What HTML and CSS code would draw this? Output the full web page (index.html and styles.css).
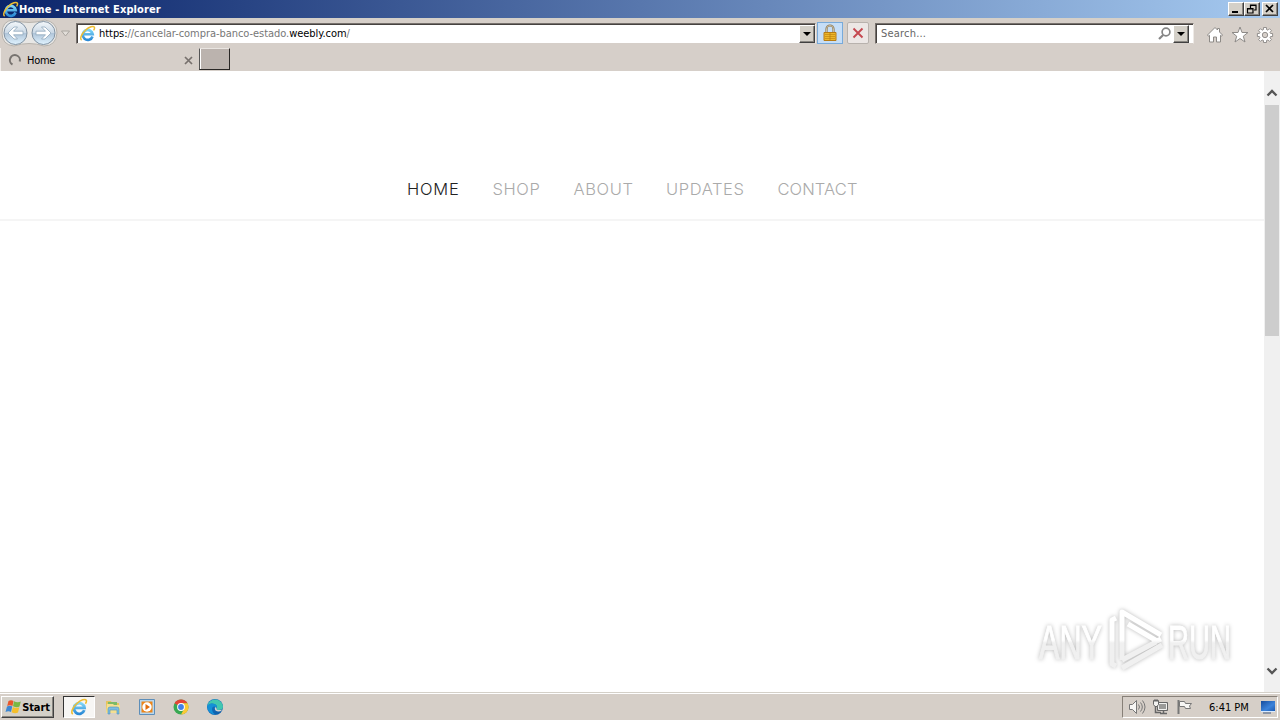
FILE: index.html
```html
<!DOCTYPE html>
<html lang="en">
<head>
    <meta charset="UTF-8">
    <title>Home</title>
    <link rel="stylesheet" href="styles.css">
</head>
<body>
    <!-- shared icons -->
    <svg class="defs" width="0" height="0">
        <defs>
            <linearGradient id="ieBlue" x1="0" y1="0" x2="0" y2="1">
                <stop offset="0" stop-color="#7fd5f7"/>
                <stop offset="1" stop-color="#2b8ad6"/>
            </linearGradient>
            <linearGradient id="orb" x1="0" y1="0" x2="0" y2="1">
                <stop offset="0" stop-color="#f4f8fb"/>
                <stop offset="0.48" stop-color="#cbd9e6"/>
                <stop offset="0.52" stop-color="#b0c5d9"/>
                <stop offset="1" stop-color="#e0f3ff"/>
            </linearGradient>
            <linearGradient id="screen" x1="0" y1="0" x2="1" y2="1">
                <stop offset="0" stop-color="#164c9c"/>
                <stop offset="0.6" stop-color="#3b83db"/>
                <stop offset="1" stop-color="#1d5ab0"/>
            </linearGradient>
            <linearGradient id="edge" x1="0" y1="0" x2="1" y2="1">
                <stop offset="0" stop-color="#1679c9"/>
                <stop offset="1" stop-color="#0c59a4"/>
            </linearGradient>
            <linearGradient id="mark" gradientUnits="userSpaceOnUse" x1="0" y1="0" x2="0" y2="74">
                <stop offset="0.46" stop-color="#fff"/>
                <stop offset="0.5" stop-color="#f0f0f0"/>
                <stop offset="1" stop-color="#f0f0f0"/>
            </linearGradient>
            <symbol id="ie" viewBox="0 0 16 16">
                <path d="M12.700 10.800A4.700 4.700 0 1 1 12.900 8.700H4.500" fill="none" stroke="url(#ieBlue)" stroke-width="2.500"/>
                <path d="M2.500 14.300C.4 13 2.400 8.200 6.100 4.900C9.600 1.700 13.600.4 14.500 2.100C14.900 3 14.300 4.200 13.700 5.100" fill="none" stroke="#eebd32" stroke-width="1.400"/>
            </symbol>
        </defs>
    </svg>

    <header class="titlebar">
        <svg class="title-icon" width="17" height="17"><use href="#ie"/></svg>
        <h1>Home - Internet Explorer</h1>
        <div class="window-buttons">
            <button><svg width="12" height="10"><path d="M2 8h6" stroke="#000" stroke-width="2"/></svg></button>
            <button><svg width="12" height="10"><path d="M4.500 4V1H10v5H8M4 1.500h6M1.500 4.500H7V9H1.500zM1 5h6" fill="none" stroke="#000" stroke-width="1.200"/></svg></button>
            <button class="close"><svg width="12" height="10"><path d="M2 1l7 7M9 1L2 8" stroke="#000" stroke-width="1.700"/></svg></button>
        </div>
    </header>

    <div class="toolbar">
        <svg class="history" width="76" height="30" viewBox="0 0 76 30">
            <path d="M13 2Q29 7 45 2Q57 4 57 15Q56 28 44 28Q29 23 14 28Q2 27 2 15Q2 3 13 2" fill="#e8e7e5" stroke="#b7b3ad"/>
            <circle cx="15.500" cy="15" r="11.500" fill="url(#orb)" stroke="#8293a3"/>
            <circle cx="43.500" cy="15" r="11.500" fill="url(#orb)" stroke="#8293a3"/>
            <path d="M8 15l6-6h3.500l-4 4.200H23v3.600h-9.500l4 4.200H14z" fill="#fff" stroke="#91a8bd" stroke-width=".8"/>
            <path d="M51 15l-6-6h-3.500l4 4.200H36v3.600h9.500l-4 4.200H45z" fill="#fff" stroke="#91a8bd" stroke-width=".8"/>
            <path d="M61.500 13h8L65.500 18z" fill="#e2ded9" stroke="#aaa6a0"/>
        </svg>
        <div class="field address">
            <svg width="17" height="17"><use href="#ie"/></svg>
            <span class="url"><b>https:</b>//cancelar-compra-banco-estado.<b>weebly.com</b>/</span>
            <button class="drop"></button>
        </div>
        <button class="lock">
            <svg width="16" height="18" viewBox="0 0 16 18">
                <path d="M4.500 9V5a3.500 3.500 0 0 1 7 0v4" fill="none" stroke="#8b7958" stroke-width="2.200"/>
                <path d="M4.500 9V5a3.500 3.500 0 0 1 7 0v4" fill="none" stroke="#d9cdb0" stroke-width=".8"/>
                <path d="M2 8.500h12v8H2z" fill="#edb72a" stroke="#b77b13"/>
                <path d="M3 10.500h10M3 12.500h10M3 14.500h10" stroke="#c88c13" stroke-width=".8"/>
                <path d="M8 9v7" stroke="#b9820f" stroke-width=".8"/>
            </svg>
        </button>
        <button class="stop"><svg width="12" height="12"><path d="M1.500 1.500l9 9M10.500 1.500l-9 9" stroke="#c54850" stroke-width="1.900"/></svg></button>
        <div class="field search">
            <span class="hint">Search...</span>
            <svg width="15" height="16" viewBox="0 0 15 16"><circle cx="9" cy="6" r="3.900" fill="none" stroke="#858585" stroke-width="1.700"/><path d="M6.200 9L2 13" stroke="#858585" stroke-width="2.200"/></svg>
            <button class="drop"></button>
        </div>
        <div class="tools">
            <svg width="18" height="18" viewBox="0 0 18 18"><path d="M1.500 9L9 1.500L11.500 4V2.500h2V6L16.500 9L15.500 10.200L14.500 9.300V16h-4v-5h-3v5h-4V9.300L2.500 10.200z" fill="#fff" stroke="#8d8a87"/></svg>
            <svg width="18" height="18" viewBox="0 0 18 18"><path d="M9 1l2 5.500h6l-4.700 3.700L14 16l-5-3.500L4 16l1.700-5.800L1 6.500h6z" fill="#fff" stroke="#8d8a87"/></svg>
            <svg width="18" height="18" viewBox="0 0 18 18">
                <path d="M7.500 1.500h3v2l1.500.7l1.500-1.500l2 2L14 6.300l.6 1.200h2v3h-2l-.6 1.400l1.500 1.500l-2 2L12 13.900l-1.500.6v2h-3v-2L6 13.900l-1.500 1.500l-2-2L4 11.900l-.6-1.400h-2v-3h2L4 6.300L2.500 4.700l2-2L6 4.200l1.500-.7z" fill="#fff" stroke="#8a8784" stroke-width=".9"/>
                <circle cx="9" cy="9" r="2.700" fill="#d6cfc9" stroke="#8a8784" stroke-width=".9"/>
            </svg>
        </div>
    </div>

    <div class="tabs">
        <div class="tab">
            <svg width="14" height="14" viewBox="0 0 14 14"><path d="M4.500 11.500A5 5 0 1 1 11.700 8.500" fill="none" stroke="#77736f" stroke-width="2"/></svg>
            <span>Home</span>
            <svg class="tab-close" width="9" height="9"><path d="M1 1l7 7M8 1L1 8" stroke="#77716d" stroke-width="1.700"/></svg>
        </div>
        <button class="new-tab"></button>
    </div>

    <div class="viewport">
        <main class="page">
            <nav>
                <a class="home">HOME</a>
                <a class="shop">SHOP</a>
                <a class="about">ABOUT</a>
                <a class="updates">UPDATES</a>
                <a class="contact">CONTACT</a>
            </nav>
        </main>
        <div class="scrollbar">
            <svg width="16" height="10" viewBox="0 0 16 10"><path d="M3.500 7.500L8 3l4.500 4.500" fill="none" stroke="#555" stroke-width="2.300"/></svg>
            <div class="thumb"></div>
            <svg class="down" width="16" height="10" viewBox="0 0 16 10"><path d="M3.500 2.500L8 7l4.500-4.500" fill="none" stroke="#555" stroke-width="2.300"/></svg>
        </div>
        <svg class="watermark" width="220" height="74" viewBox="0 0 220 74">
            <text x="9" y="53" textLength="63" lengthAdjust="spacingAndGlyphs">ANY</text>
            <path class="play" d="M86 12L82 14V58L86 60"/>
            <path class="play" d="M92 54V6L131 29"/>
            <path class="play" d="M98 18L127 35L131 33M92 54L126 36"/>
            <path class="play" d="M92 62L132 39"/>
            <text x="138" y="53" textLength="63" lengthAdjust="spacingAndGlyphs">RUN</text>
        </svg>
    </div>

    <footer class="taskbar">
        <button class="start">
            <svg width="17" height="16" viewBox="0 0 17 16">
                <path d="M3.500 2Q6 .5 8.500 2L7.500 7Q5 5.500 2.200 7z" fill="#e8572b"/>
                <path d="M9 2.300Q12.500 4 15.800 2.500L14.500 7.500Q12 9 8 7.300z" fill="#79b843"/>
                <path d="M2 7.600Q5 6.100 7.300 7.600L6 13Q3.500 11.500.5 13z" fill="#3d87d2"/>
                <path d="M7.900 8Q11 9.600 14.300 8.200L13 13.500Q10 15 6.600 13.300z" fill="#f5bf2c"/>
            </svg>
            <span>Start</span>
        </button>
        <div class="launch active"><svg width="18" height="18"><use href="#ie"/></svg></div>
        <div class="launch">
            <svg width="18" height="18" viewBox="0 0 18 18">
                <path d="M2 3h5l1 2h7v9H2z" fill="#e6c45d"/>
                <path d="M4 4h9v4H4z" fill="#7cba65"/><path d="M3 6h6l1 1h6v8H2z" fill="#f4df91"/>
                <path d="M4 16v-5q0-2 2-2h7q2 0 2 2v5h-2v-4H6v4z" fill="#7bbce1" stroke="#4e94bd" stroke-width=".6"/>
            </svg>
        </div>
        <div class="launch">
            <svg width="18" height="18" viewBox="0 0 18 18"><path d="M1.500 1.500h15v15h-15z" fill="#b8d7ee" stroke="#5d8eb9"/><path d="M3.500 3.500h11v11h-11z" fill="#ed8519"/><circle cx="9" cy="9" r="4.700" fill="#fff"/><path d="M7.500 6L12 9L7.500 12z" fill="#e26c0c"/></svg>
        </div>
        <div class="launch">
            <svg width="18" height="18" viewBox="0 0 18 18"><circle cx="9" cy="9" r="7.500" fill="#39a852"/><path d="M9 9L2.500 5.250A7.500 7.500 0 0 1 15.500 5.250H9z" fill="#e54435"/><path d="M9 9V5.250h6.500A7.500 7.500 0 0 1 9 16.500L12.200 10.800z" fill="#fcc934"/><circle cx="9" cy="9" r="3.900" fill="#fff"/><circle cx="9" cy="9" r="2.900" fill="#4280e8"/></svg>
        </div>
        <div class="launch">
            <svg width="18" height="18" viewBox="0 0 18 18"><circle cx="9" cy="9" r="8" fill="url(#edge)"/><path d="M1.200 8A8 8 0 0 1 17 8.500Q17 12 13 12Q10 12 10.500 10Q11.500 7 8.500 6Q4 4.500 1.200 8" fill="#42c7b0"/><path d="M1.200 8Q4 4.500 8.500 6Q11.500 7 10.500 10L8.500 8.500Q6 8 6 11Q6 15 10 16.800Q1.500 16 1.200 8" fill="#1591d7"/><path d="M9 9Q8 13 12 13.500Q14.500 13.700 16 12L17 11Q17 12 13 12Q10 12 10.500 10z" fill="#d7d2ce"/></svg>
        </div>
        <div class="tray">
            <svg width="18" height="16" viewBox="0 0 18 16"><path d="M1.500 5.500h3l4-4v13l-4-4h-3z" fill="#f7f6f4" stroke="#777"/><path d="M10.500 5.500q2 2.500 0 5M12.500 3.500q3.600 4.500 0 9M14.500 1.500q5 6.500 0 13" fill="none" stroke="#777"/></svg>
            <svg width="18" height="16" viewBox="0 0 18 16"><path d="M5.500 3.500h10v8h-10z" fill="#9a9a98" stroke="#666"/><path d="M6.500 4.500h8v6h-8z" fill="none" stroke="#f2f2f0"/><path d="M8 14.500h7M11.500 12v2M3.500 7v6.500H9" fill="none" stroke="#666" stroke-width="1.500"/><path d="M1.500 1.500v4l1.500 2h2l1.500-2v-4zM3 0v3M5 0v3" fill="#f2f2f0" stroke="#666"/></svg>
            <svg width="18" height="16" viewBox="0 0 18 16"><path d="M2.500 1v14" stroke="#777" stroke-width="2"/><path d="M3.500 2.500h5l1 2h6l-2 2.500 1 2.500h-5l-1-2h-5z" fill="#f7f6f4" stroke="#777"/></svg>
            <time>6:41 PM</time>
            <svg class="desktop" width="16" height="16" viewBox="0 0 16 16"><path d="M1 2h14v10H1z" fill="url(#screen)"/><path d="M1 12.500h14" stroke="#d9eaff"/><path d="M3 14h8" stroke="#405a82"/></svg>
        </div>
    </footer>
</body>
</html>
```

FILE: styles.css
```css
* {
    box-sizing: border-box;
}

body {
    margin: 0;
    width: 1280px;
    height: 720px;
    overflow: hidden;
    display: flex;
    flex-direction: column;
    background: #d6cfc9;
    color: #000;
    font: 11px "DejaVu Sans Condensed", "DejaVu Sans", sans-serif;
}

svg {
    display: block;
    flex: none;
}

.defs {
    position: absolute;
}

button {
    padding: 0;
    border: 0;
    font: inherit;
    display: flex;
    align-items: center;
    justify-content: center;
}

/* title bar */
.titlebar {
    height: 18px;
    flex: none;
    display: flex;
    align-items: center;
    padding: 0 2px;
    background: linear-gradient(90deg, #0a246a, #a6caf0);
}

h1 {
    margin: 0;
    color: #fff;
    font-size: 11px;
    letter-spacing: 0.12px;
    white-space: nowrap;
}

.window-buttons {
    display: flex;
    margin-left: auto;
}

.window-buttons button {
    width: 16px;
    height: 14px;
}

.window-buttons button,
.drop,
.start {
    background: #d4d0c8;
    border: 1px solid;
    border-color: #fff #404040 #404040 #fff;
    box-shadow: inset -1px -1px #888580;
}

.window-buttons .close {
    margin-left: 2px;
}

/* address row */
.toolbar {
    height: 30px;
    flex: none;
    display: flex;
    align-items: flex-start;
    border-top: 1px solid #d4d0c8;
}

.history {
    margin-top: -1px;
}

.field {
    height: 21px;
    margin-top: 4px;
    display: flex;
    align-items: center;
    background: #fff;
    border: 1px solid;
    border-color: #77716d #eeeae6 #d6cfc9 #77716d;
    box-shadow: inset 1px 1px #464240;
}

.address {
    width: 740px;
    padding-left: 2px;
}

.url {
    margin-left: 3px;
    color: #777;
    white-space: nowrap;
    letter-spacing: -0.05px;
}

.url b {
    color: #000;
    font-weight: normal;
}

.drop {
    width: 16px;
    height: 18px;
    margin: 0 0 0 auto;
}

.drop::after {
    content: "";
    border: 4px solid transparent;
    border-top-color: #000;
    border-bottom: 0;
}

.lock {
    width: 26px;
    height: 22px;
    margin: 3px 0 0 1px;
    background: #c6def7;
    border: 1px solid #78aada;
}

.stop {
    width: 22px;
    height: 22px;
    margin: 3px 0 0 4px;
    background: #ece7e5;
    border: 1px solid #b8b2ad;
    border-radius: 2px;
}

.search {
    width: 319px;
    margin-left: 6px;
    padding: 0 4px;
}

.hint {
    margin-left: 1px;
    color: #666;
    letter-spacing: 0.2px;
}

.search svg {
    margin-left: auto;
}

.search .drop {
    margin-left: 1px;
}

.tools {
    display: flex;
    gap: 7px;
    margin: 7px 0 0 12px;
}

/* tabs */
.tabs {
    height: 23px;
    flex: none;
    display: flex;
}

.tab {
    width: 198px;
    height: 23px;
    display: flex;
    align-items: center;
    padding: 1px 5px 0 7px;
    border-left: 1px solid #f2eeea;
}

.tab span {
    margin-left: 5px;
    letter-spacing: -0.3px;
}

.tab-close {
    margin-left: auto;
}

.new-tab {
    width: 31px;
    height: 22px;
    margin-left: 1px;
    background: #bbb3ae;
    border: solid;
    border-width: 1px 1px 1px 1px;
    border-color: #e9e5e1 #292725 #292725 #555;
    box-shadow: inset 1px 0 #fff;
}

/* page */
.viewport {
    position: relative;
    height: 621px;
    flex: none;
    display: flex;
    background: #fff;
}

.page {
    width: 1264px;
}

nav {
    height: 150px;
    display: flex;
    padding: 106px 0 0 407px;
    border-bottom: 2px solid #f5f5f5;
    font: 300 16.5px/24px Inter, sans-serif;
}

nav a {
    flex: none;
    color: #aaa;
    white-space: nowrap;
}

nav .home {
    width: 85.5px;
    color: #222;
    letter-spacing: 0.8px;
}

nav .shop {
    width: 81px;
    letter-spacing: 0.6px;
}

nav .about {
    width: 92.5px;
    letter-spacing: 0.6px;
}

nav .updates {
    width: 111.5px;
    letter-spacing: 0.6px;
}

nav .contact {
    letter-spacing: 0.1px;
}

.scrollbar {
    width: 16px;
    padding: 17px 0 16px;
    display: flex;
    flex-direction: column;
    background: #f0f0f0;
}

.thumb {
    width: 14px;
    height: 231px;
    margin: 7px 0 0 1px;
    background: #cdcdcd;
}

.down {
    margin-top: auto;
}

/* sits over the page */
.watermark {
    position: absolute;
    left: 1030px;
    top: 535px;
    fill: url(#mark);
    filter: drop-shadow(0 0 2px rgba(0, 0, 0, 0.28));
}

.watermark text {
    font: 49px "Liberation Sans", sans-serif;
    stroke: url(#mark);
    stroke-width: 1;
}

.watermark .play {
    fill: none;
    stroke: url(#mark);
    stroke-width: 5;
    stroke-linejoin: round;
}

/* taskbar */
.taskbar {
    height: 28px;
    flex: none;
    display: flex;
    align-items: flex-start;
    padding: 3px 2px 0 1px;
    border-top: 1px solid #d4d0c8;
    box-shadow: inset 0 1px #fff;
    background: #d6cfc8;
}

.start {
    width: 53px;
    height: 22px;
    margin-right: 9px;
    font-weight: bold;
    letter-spacing: -0.1px;
}

.launch {
    width: 32px;
    height: 22px;
    margin-right: 2px;
    display: flex;
    align-items: center;
    justify-content: center;
}

.active {
    background: #f7f6f4;
    border: 1px solid;
    border-color: #333 #fff #fff #333;
}

.tray {
    width: 156px;
    height: 22px;
    margin-left: auto;
    display: flex;
    align-items: center;
    gap: 6px;
    padding-left: 5px;
    border: 1px solid;
    border-color: #878078 #fff #fff #878078;
}

time {
    margin-left: 9px;
    white-space: nowrap;
}

.desktop {
    margin: 0 1px 0 auto;
}
```
